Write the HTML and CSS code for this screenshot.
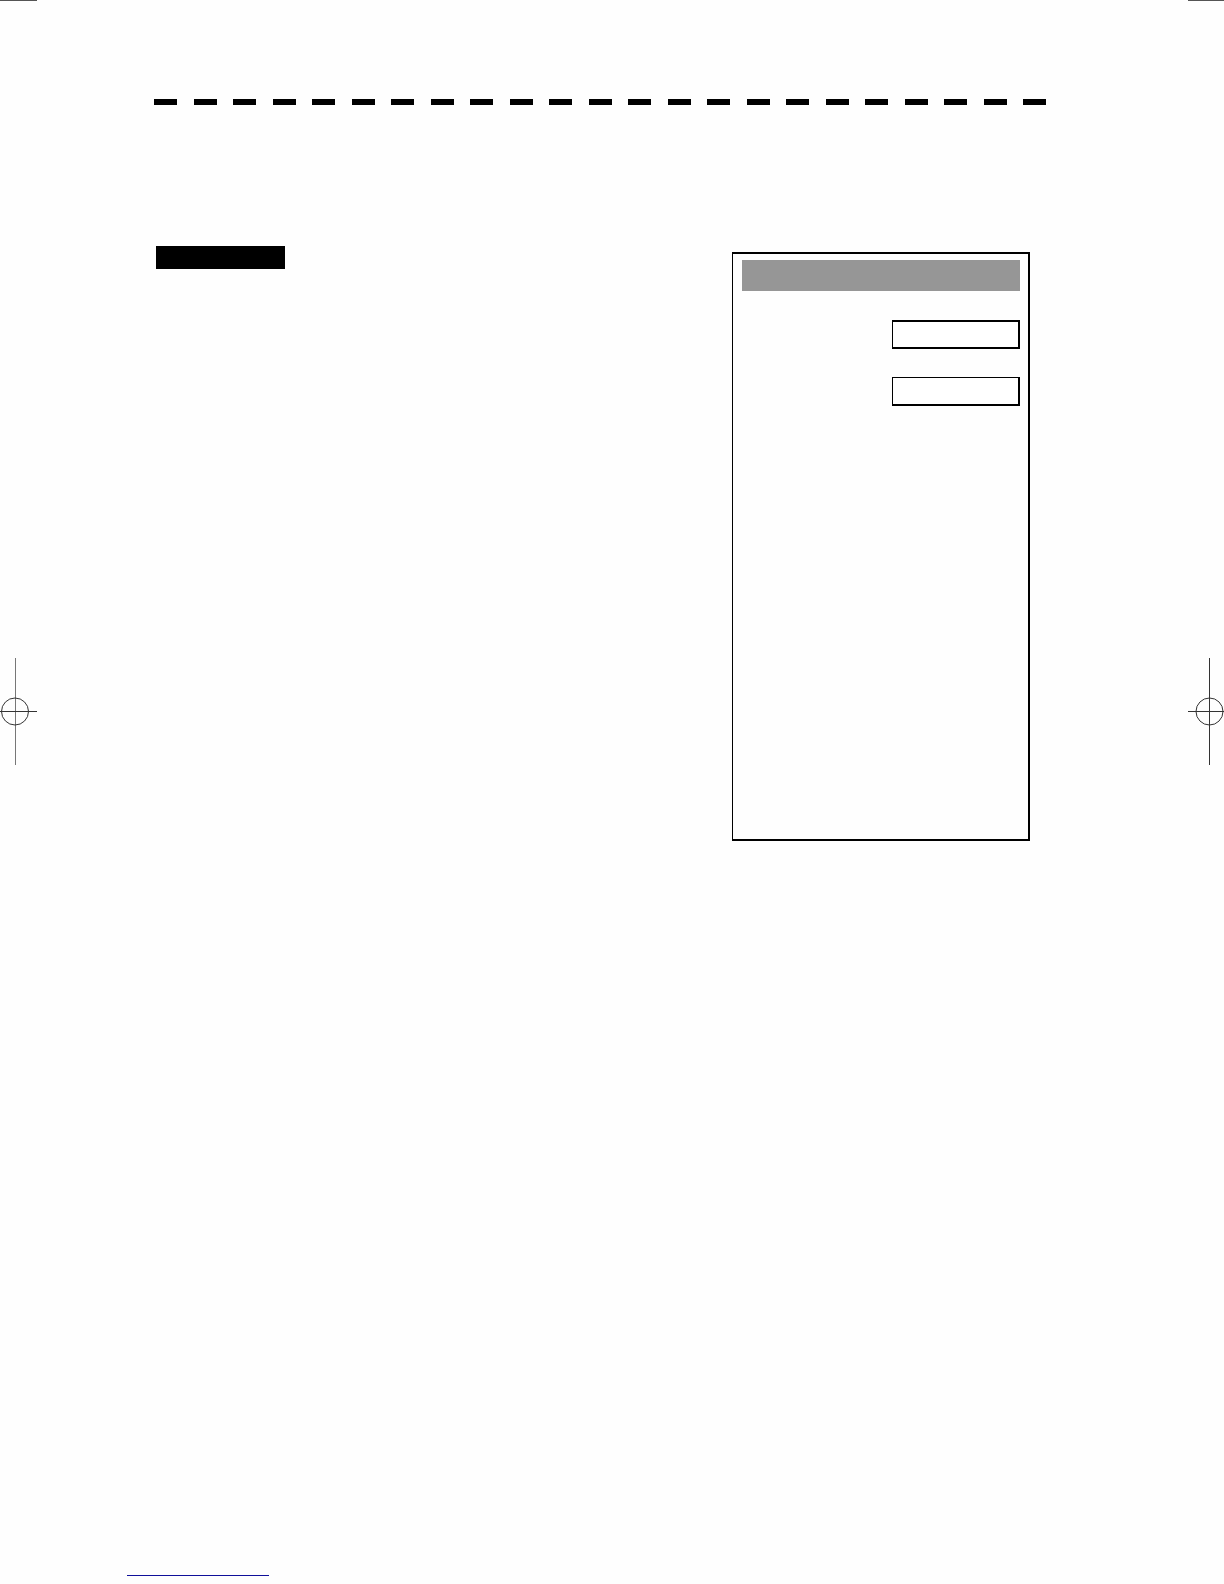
FILE: index.html
```html
<!DOCTYPE html>
<html lang="en">
<head>
    <meta charset="UTF-8">
    <meta name="viewport" content="width=device-width, initial-scale=1.0">
    <title>Manual Page</title>
    <link rel="stylesheet" href="styles.css">
</head>
<body>
    <div class="side">
        <div class="trim"></div>
        <svg class="mark" width="37" height="107" viewBox="0 0 37 107" aria-hidden="true">
            <path class="light" d="M15.5 0V107"/>
            <path d="M0 53.5H37"/>
            <circle cx="15" cy="53.5" r="13.5"/>
        </svg>
    </div>

    <div class="page">
        <header class="dashes">
            <span></span><span></span><span></span><span></span><span></span><span></span>
            <span></span><span></span><span></span><span></span><span></span><span></span>
            <span></span><span></span><span></span><span></span><span></span><span></span>
            <span></span><span></span><span></span><span></span><span></span>
        </header>

        <main class="content">
            <div class="badge"></div>
            <form class="panel">
                <div class="panel-title"></div>
                <input class="field" type="text" aria-label="First value">
                <input class="field thin" type="text" aria-label="Second value">
            </form>
        </main>

        <footer>
            <a class="footer-link" href="#" aria-label="Back to top"></a>
        </footer>
    </div>

    <div class="side">
        <div class="trim"></div>
        <svg class="mark" width="36" height="107" viewBox="0 0 36 107" aria-hidden="true">
            <path d="M21.5 0V107"/>
            <path d="M0 53.5H36"/>
            <circle cx="21.5" cy="53.5" r="13.5"/>
        </svg>
    </div>
</body>
</html>
```

FILE: styles.css
```css
* {
    box-sizing: border-box;
}

body {
    margin: 0;
    min-height: 100vh;
    display: grid;
    grid-template-columns: 37px 1fr 36px;
    background-color: #fefefe;
    font-family: "Liberation Sans", Arial, sans-serif;
}

/* crop lines and registration marks on both edges */
.trim {
    height: 1px;
    background-color: #555;
}

.mark {
    display: block;
    margin-top: 657px;
    fill: none;
    stroke: #333;
    stroke-width: 1;
}

.mark .light {
    stroke: #777;
}

.page {
    display: flex;
    flex-direction: column;
    padding: 99px 142px 8px 117px;
}

.dashes {
    display: flex;
    justify-content: space-between;
}

.dashes span {
    width: 23px;
    height: 6px;
    background-color: black;
}

.content {
    display: flex;
    justify-content: space-between;
    align-items: flex-start;
    flex: 1;
    padding: 141px 16px 0 2px;
}

.badge {
    width: 129px;
    height: 23px;
    background-color: black;
}

.panel {
    display: flex;
    flex-direction: column;
    align-items: flex-end;
    gap: 28px;
    width: 298px;
    min-height: 589px;
    margin-top: 6px;
    padding: 6px 8px 8px 9px;
    border: 2px solid black;
    border-left-width: 1px;
}

.panel-title {
    width: 100%;
    height: 31px;
    margin-bottom: 1px;
    background-color: #969696;
}

.field {
    width: 128px;
    height: 29px;
    padding: 0 6px;
    border: 2px solid black;
    border-left-width: 1px;
    background-color: white;
    font-size: 16px;
}

.thin {
    border-top-width: 1px;
}

.footer-link {
    display: block;
    width: 142px;
    margin-left: -27px;
    border-bottom: 1px solid #10109a;
}
```
